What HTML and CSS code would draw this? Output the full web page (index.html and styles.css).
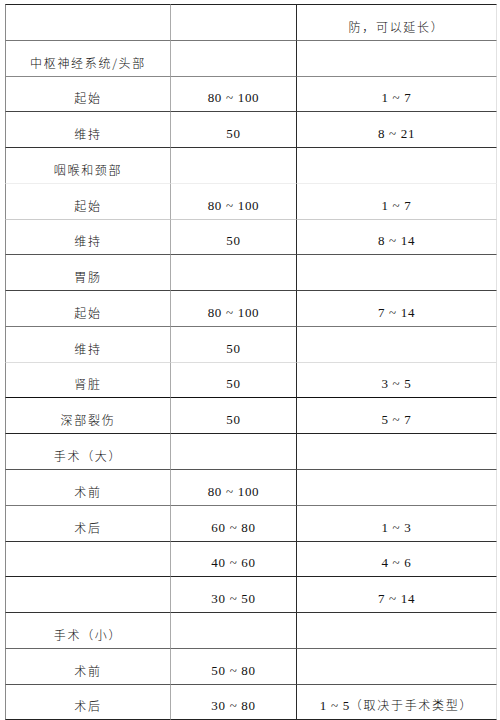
FILE: index.html
```html
<!DOCTYPE html>
<html lang="zh-CN">
<head>
<meta charset="utf-8">
<title>表</title>
<link rel="stylesheet" href="styles.css">
</head>
<body>
<table class="grid">
  <colgroup>
    <col class="c1"><col class="c2"><col class="c3">
  </colgroup>
  <tbody>
    <tr class="l222"><td></td><td></td><td>防，可以延长）</td></tr>
    <tr class="l777"><td>中枢神经系统/头部</td><td></td><td></td></tr>
    <tr class="l888 s"><td>起始</td><td class="num">80 ~ 100</td><td class="num">1 ~ 7</td></tr>
    <tr class="l444"><td>维持</td><td class="num">50</td><td class="num">8 ~ 21</td></tr>
    <tr class="l333"><td>咽喉和颈部</td><td></td><td></td></tr>
    <tr class="leee"><td>起始</td><td class="num">80 ~ 100</td><td class="num">1 ~ 7</td></tr>
    <tr class="lccc s"><td>维持</td><td class="num">50</td><td class="num">8 ~ 14</td></tr>
    <tr class="l555"><td>胃肠</td><td></td><td></td></tr>
    <tr class="l444"><td>起始</td><td class="num">80 ~ 100</td><td class="num">7 ~ 14</td></tr>
    <tr class="l777"><td>维持</td><td class="num">50</td><td></td></tr>
    <tr class="lddd s"><td>肾脏</td><td class="num">50</td><td class="num">3 ~ 5</td></tr>
    <tr class="l111"><td>深部裂伤</td><td class="num">50</td><td class="num">5 ~ 7</td></tr>
    <tr class="l222"><td>手术（大）</td><td></td><td></td></tr>
    <tr class="l555"><td>术前</td><td class="num">80 ~ 100</td><td></td></tr>
    <tr class="l777"><td>术后</td><td class="num">60 ~ 80</td><td class="num">1 ~ 3</td></tr>
    <tr class="l333 s"><td></td><td class="num">40 ~ 60</td><td class="num">4 ~ 6</td></tr>
    <tr class="l222"><td></td><td class="num">30 ~ 50</td><td class="num">7 ~ 14</td></tr>
    <tr class="l333"><td>手术（小）</td><td></td><td></td></tr>
    <tr class="l666"><td>术前</td><td class="num">50 ~ 80</td><td></td></tr>
    <tr class="l555 last"><td>术后</td><td class="num">30 ~ 80</td><td><span class="n">1 ~ 5</span>（取决于手术类型）</td></tr>
  </tbody>
</table>
</body>
</html>
```

FILE: styles.css
```css
html, body {
  margin: 0;
  padding: 0;
  background: #ffffff;
}

.grid {
  margin: 4px 0 0 5px;
  width: 492px;
  table-layout: fixed;
  border-collapse: separate;
  border-spacing: 0;
  font-family: "Noto Sans CJK SC", "Noto Sans", sans-serif;
  font-size: 12px;
  font-weight: 300;
  letter-spacing: 1.7px;
  color: #111;
}

.c1 { width: 165px; }
.c2 { width: 126px; }
.c3 { width: 201px; }

.grid td {
  box-sizing: border-box;
  height: 36px;
  padding: 0 0 6px 0;
  line-height: 14px;
  vertical-align: bottom;
  text-align: center;
  white-space: nowrap;
  border-top: 1px solid #444;
}

.grid tr.s td { height: 35px; }

.grid td:nth-child(1) { border-left: 1px solid #8a8a8a; }
.grid td:nth-child(2) { border-left: 1px solid #ababab; }
.grid td:nth-child(3) {
  border-left: 1px solid #2a2a2a;
  border-right: 1px solid #e2e2e2;
}

.grid tr.last td {
  height: 36px;
  border-bottom: 1px solid #222;
}

.grid .num,
.grid .n {
  font-family: "Liberation Serif", "Times New Roman", serif;
  font-size: 13px;
  font-weight: 400;
  letter-spacing: 0.7px;
}

.grid tr.l111 td { border-top-color: #111; }
.grid tr.l222 td { border-top-color: #222; }
.grid tr.l333 td { border-top-color: #333; }
.grid tr.l444 td { border-top-color: #444; }
.grid tr.l555 td { border-top-color: #555; }
.grid tr.l666 td { border-top-color: #666; }
.grid tr.l777 td { border-top-color: #777; }
.grid tr.l888 td { border-top-color: #888; }
.grid tr.lccc td { border-top-color: #ccc; }
.grid tr.lddd td { border-top-color: #ddd; }
.grid tr.leee td { border-top-color: #eee; }
```
